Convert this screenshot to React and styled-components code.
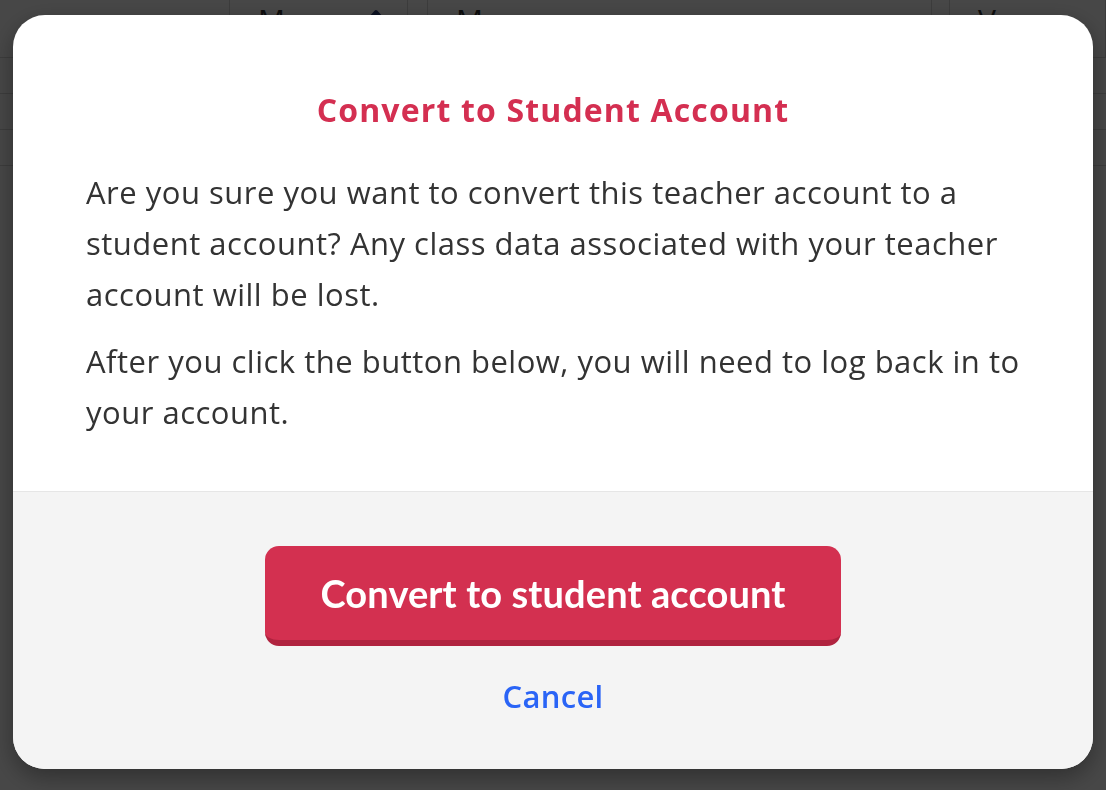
import React from "react";
import styled, { createGlobalStyle } from "styled-components";

const GlobalStyle = createGlobalStyle`
  html, body {
    margin: 0;
    padding: 0;
    background: #ffffff;
    font-family: "Open Sans", "Lato", sans-serif;
  }
  * { box-sizing: border-box; }
`;

// table behind the dialog, only its header shows above the modal
const columns = [
  { label: "", width: 230 },
  { label: "Ma", width: 178, sort: true },
  { label: "", width: 20 },
  { label: "M", width: 504 },
  { label: "", width: 18 },
  { label: "V", width: 156 },
];

const Page = styled.div`
  width: 1106px;
  height: 790px;
  overflow: hidden;
  background: #ffffff;
`;

const HeaderRow = styled.div`
  display: flex;
  height: 58px;
  border-bottom: 1px solid #d8d8d8;
`;

const HeaderCell = styled.div`
  width: ${props => props.width}px;
  flex: none;
  border-right: 1px solid #d8d8d8;
  display: flex;
  align-items: flex-start;
  justify-content: space-between;
  padding: 0 ${props => (props.empty ? 0 : 28)}px 0 ${props => (props.empty ? 0 : 28)}px;
  padding-top: 2px;
  font-size: 30px;
  line-height: 36px;
  color: #333;
`;

const SortIcon = styled.svg`
  width: 22px;
  height: 16px;
  margin-top: 6px;
  margin-right: -8px;
`;

const Row = styled.div`
  height: 36px;
  border-bottom: 1px solid #d8d8d8;
`;

const Overlay = styled.div`
  position: fixed;
  inset: 0;
  background: rgba(0, 0, 0, 0.72);
  display: flex;
  justify-content: center;
  align-items: flex-start;
  padding-top: 15px;
`;

const Modal = styled.div`
  width: 1080px;
  height: 754px;
  border-radius: 32px;
  overflow: hidden;
  background: #ffffff;
  display: flex;
  flex-direction: column;
  box-shadow: 0 8px 24px rgba(0, 0, 0, 0.35);
`;

const Body = styled.div`
  padding: 75px 73px 53px;
`;

const Title = styled.h2`
  margin: 0 0 37px;
  text-align: center;
  font-size: 32px;
  line-height: 40px;
  font-weight: 700;
  letter-spacing: 1.15px;
  color: #d42f51;
`;

const Paragraph = styled.p`
  margin: 0 0 16px;
  font-size: 31px;
  line-height: 51px;
  letter-spacing: 0.5px;
  color: #333333;
  &:last-child { margin-bottom: 0; }
`;

const Footer = styled.div`
  flex: 1;
  background: #f4f4f4;
  border-top: 1px solid #e6e6e6;
  padding: 54px 0 53px;
  display: flex;
  flex-direction: column;
  align-items: center;
`;

const PrimaryButton = styled.button`
  width: 576px;
  height: 100px;
  border: none;
  border-bottom: 6px solid #b0233f;
  border-radius: 14px;
  background: #d33050;
  color: #ffffff;
  font-family: "Lato", "Open Sans", sans-serif;
  font-size: 38px;
  font-weight: 700;
  letter-spacing: 0.1px;
  cursor: pointer;
`;

const LinkButton = styled.button`
  margin-top: 29px;
  border: none;
  background: none;
  height: 40px;
  padding: 0;
  font-family: inherit;
  font-size: 31px;
  font-weight: 600;
  letter-spacing: 0.3px;
  color: #2a64f6;
  cursor: pointer;
`;

function App() {
  return (
    <>
      <GlobalStyle />
      <Page>
        <HeaderRow>
          {columns.map((col, i) => (
            <HeaderCell key={i} width={col.width} empty={!col.label}>
              {col.label}
              {col.sort && (
                <SortIcon viewBox="0 0 22 16">
                  <path d="M3 13 L11 4 L19 13" fill="none" stroke="#2d3e7a" strokeWidth="4" strokeLinecap="round" strokeLinejoin="round" />
                </SortIcon>
              )}
            </HeaderCell>
          ))}
        </HeaderRow>
        <Row />
        <Row />
        <Row />
      </Page>
      <Overlay>
        <Modal>
          <Body>
            <Title>Convert to Student Account</Title>
            <Paragraph>
              Are you sure you want to convert this teacher account to a
              student account? Any class data associated with your teacher
              account will be lost.
            </Paragraph>
            <Paragraph>
              After you click the button below, you will need to log back in to
              your account.
            </Paragraph>
          </Body>
          <Footer>
            <PrimaryButton>Convert to student account</PrimaryButton>
            <LinkButton>Cancel</LinkButton>
          </Footer>
        </Modal>
      </Overlay>
    </>
  );
}

export default App;
